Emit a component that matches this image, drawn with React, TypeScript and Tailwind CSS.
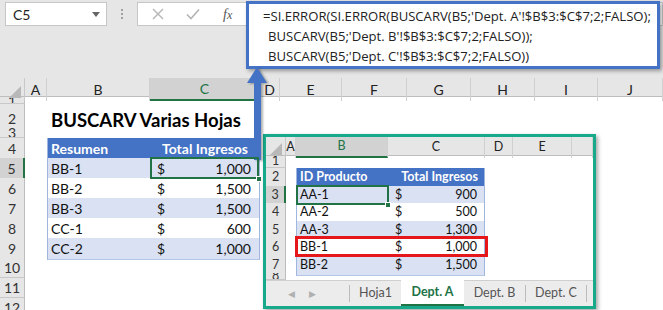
import React from 'react'

const FONT = { fontFamily: 'Lato, "Open Sans", sans-serif' }

const mainCols = ['A', 'B', 'C', 'D', 'E', 'F', 'G', 'H', 'I', 'J']
const mainRows: { n: number; h: string }[] = [
  { n: 1, h: 'h-[7px]' },
  { n: 2, h: 'h-[24px]' },
  { n: 3, h: 'h-[10px]' },
  { n: 4, h: 'h-[20px]' },
  { n: 5, h: 'h-[20px]' },
  { n: 6, h: 'h-[20px]' },
  { n: 7, h: 'h-[20px]' },
  { n: 8, h: 'h-[20px]' },
  { n: 9, h: 'h-[20px]' },
  { n: 10, h: 'h-[20px]' },
  { n: 11, h: 'h-[20px]' },
  { n: 12, h: 'h-[20px]' },
]

const resumen = [
  { id: 'BB-1', v: '1,000' },
  { id: 'BB-2', v: '1,500' },
  { id: 'BB-3', v: '1,500' },
  { id: 'CC-1', v: '600' },
  { id: 'CC-2', v: '1,000' },
]

const deptA = [
  { id: 'AA-1', v: '900' },
  { id: 'AA-2', v: '500' },
  { id: 'AA-3', v: '1,300' },
  { id: 'BB-1', v: '1,000' },
  { id: 'BB-2', v: '1,500' },
]

function FormulaBar() {
  return (
    <div className="h-[78px] bg-[#e6e6e6]">
      <div className="flex items-start pt-[2px]">
        <div className="ml-[5px] w-[102px] h-[24px] bg-white border border-[#c6c6c6] flex items-center justify-between pl-[7px] pr-[6px]">
          <span className="text-[14px] text-[#222]" style={FONT}>C5</span>
          <span className="w-0 h-0 border-l-[4px] border-r-[4px] border-t-[5px] border-l-transparent border-r-transparent border-t-[#666]" />
        </div>
        <div className="w-[30px] h-[24px] flex flex-col items-center justify-center gap-[2px]">
          <span className="w-[2px] h-[2px] bg-[#a0a0a0]" />
          <span className="w-[2px] h-[2px] bg-[#a0a0a0]" />
          <span className="w-[2px] h-[2px] bg-[#a0a0a0]" />
        </div>
        <div className="flex-1 h-[24px] bg-white border border-[#c6c6c6] flex items-center">
          <svg className="ml-[14px]" width="12" height="12" viewBox="0 0 12 12">
            <path d="M1 1L11 11M11 1L1 11" stroke="#b4b4b4" strokeWidth="1.4" fill="none" />
          </svg>
          <svg className="ml-[22px]" width="14" height="12" viewBox="0 0 14 12">
            <path d="M1 6.5L5 10.5L13 1.5" stroke="#b4b4b4" strokeWidth="1.6" fill="none" />
          </svg>
          <span className="ml-[23px] italic text-[14px] text-[#555]" style={{ fontFamily: '"Liberation Serif", serif' }}>
            f<span className="text-[12px]">x</span>
          </span>
        </div>
      </div>
    </div>
  )
}

function ColHeader({ labels, cls, sel, small }: { labels: string[]; cls: string; sel: string; small?: boolean }) {
  return (
    <div className={`grid ${cls} bg-[#e6e6e6] border-b border-[#bdbdbd]`} style={FONT}>
      <div className="relative border-r border-[#c8c8c8]">
        <span className="absolute right-[3px] bottom-[3px] w-0 h-0" style={{ borderBottom: '12px solid #b8b8b8', borderLeft: '12px solid transparent' }} />
      </div>
      {labels.map((c) => (
        <div
          key={c}
          className={`flex items-center justify-center border-r border-[#d0d0d0] ${small ? 'text-[12.5px]' : 'text-[14px]'} ${
            c === sel ? 'bg-[#d2d2d2] text-[#217346] border-b-2 border-b-[#217346]' : 'text-[#222]'
          }`}
        >
          {c}
        </div>
      ))}
    </div>
  )
}

function MainSheet() {
  const cls = 'grid-cols-[25px_22px_103px_110px_20px_62px_65px_64px_64px_63px_65px]'
  return (
    <div>
      <div className="h-[19px]">
        <ColHeader labels={mainCols} cls={`${cls} h-[19px]`} sel="C" />
      </div>
      {mainRows.map(({ n, h }) => {
        const data = n >= 5 && n <= 9 ? resumen[n - 5] : null
        const band = n === 5 || n === 7 || n === 9
        const tbl = n >= 4 && n <= 9
        const cellBg = n === 4 ? 'bg-[#4472c4]' : band ? 'bg-[#d9e1f2]' : 'bg-white'
        return (
          <div key={n} className={`grid ${cls} ${h}`} style={FONT}>
            <div
              className={`flex items-center justify-center overflow-hidden text-[14px] text-[#333] border-b border-[#c8c8c8] ${
                n === 5 ? 'bg-[#d2d2d2] border-r-2 border-r-[#217346]' : 'bg-[#e6e6e6] border-r border-r-[#bdbdbd]'
              }`}
            >
              {n}
            </div>
            <div />
            <div
              className={`flex items-center overflow-visible whitespace-nowrap pl-[3px] text-[14px] ${
                tbl ? `${cellBg} border-l border-[#9fb6df] border-b border-b-[#b4c6e7]` : ''
              } ${n === 4 ? 'font-bold text-white' : 'text-[#111]'}`}
            >
              {n === 2 && <span className="pl-[1px] pt-[3px] text-[18.5px] font-bold text-black">BUSCARV Varias Hojas</span>}
              {n === 4 && 'Resumen'}
              {data && data.id}
            </div>
            <div
              className={`relative flex items-center text-[14px] ${
                tbl ? `${cellBg} border-r border-[#9fb6df] border-b border-b-[#b4c6e7]` : ''
              } ${n === 4 ? 'font-bold text-white justify-end pr-[11px]' : 'text-[#111] justify-between pl-[7px] pr-[8px]'}`}
            >
              {n === 4 && 'Total Ingresos'}
              {data && (
                <>
                  <span>$</span>
                  <span>{data.v}</span>
                </>
              )}
              {n === 5 && (
                <>
                  <span className="absolute inset-0 -top-[1px] border-2 border-[#217346] z-10" />
                  <span className="absolute -right-[3px] -bottom-[3px] w-[6px] h-[6px] bg-[#217346] border border-white z-10" />
                </>
              )}
            </div>
            <div />
            <div />
            <div />
            <div />
            <div />
            <div />
            <div />
          </div>
        )
      })}
    </div>
  )
}

function Inset() {
  const cls = 'grid-cols-[20px_10px_92px_97px_28px_59px_21px]'
  const rows: { n: number; h: string }[] = [
    { n: 1, h: 'h-[12px]' },
    { n: 2, h: 'h-[18px]' },
    { n: 3, h: 'h-[17px]' },
    { n: 4, h: 'h-[18px]' },
    { n: 5, h: 'h-[17px]' },
    { n: 6, h: 'h-[18px]' },
    { n: 7, h: 'h-[17px]' },
    { n: 8, h: 'h-[7px]' },
  ]
  return (
    <div className="absolute left-[263px] top-[134px] w-[333px] h-[175px] border-[3px] border-[#17a98a] bg-white shadow-[2px_2px_4px_rgba(0,0,0,0.35)] overflow-hidden flex flex-col">
      <div className="h-[19px]">
        <ColHeader labels={['A', 'B', 'C', 'D', 'E', '']} cls={`${cls} h-[19px]`} sel="B" small />
      </div>
      {rows.map(({ n, h }) => {
        const data = n >= 3 && n <= 7 ? deptA[n - 3] : null
        const band = n === 3 || n === 5 || n === 7
        const tbl = n >= 2 && n <= 7
        const cellBg = n === 2 ? 'bg-[#4472c4]' : band ? 'bg-[#d9e1f2]' : 'bg-white'
        return (
          <div key={n} className={`grid ${cls} ${h} shrink-0`} style={FONT}>
            <div
              className={`flex items-center justify-center overflow-hidden text-[12.5px] text-[#333] border-b border-[#c8c8c8] ${
                n === 3 ? 'bg-[#d2d2d2] border-r-2 border-r-[#217346]' : 'bg-[#e6e6e6] border-r border-r-[#bdbdbd]'
              }`}
            >
              {n}
            </div>
            <div />
            <div
              className={`relative flex items-center pl-[3px] text-[12.5px] ${
                tbl ? `${cellBg} border-l border-[#9fb6df] border-b border-b-[#b4c6e7]` : ''
              } ${n === 2 ? 'font-bold text-white' : 'text-[#111]'}`}
            >
              {n === 2 && 'ID Producto'}
              {data && data.id}
              {n === 3 && (
                <>
                  <span className="absolute -left-px -right-px -top-[1px] bottom-0 border-2 border-[#217346] z-10" />
                  <span className="absolute -right-[3px] -bottom-[3px] w-[6px] h-[6px] bg-[#217346] border border-white z-10" />
                </>
              )}
              {n === 6 && (
                <span className="absolute -left-[2px] -top-[2px] w-[193px] h-[21px] border-[3px] border-[#e5171a] z-10" />
              )}
            </div>
            <div
              className={`flex items-center text-[12.5px] ${
                tbl ? `${cellBg} border-r border-[#9fb6df] border-b border-b-[#b4c6e7]` : ''
              } ${n === 2 ? 'font-bold text-white justify-end pr-[6px]' : 'text-[#111] justify-between pl-[7px] pr-[7px]'}`}
            >
              {n === 2 && 'Total Ingresos'}
              {data && (
                <>
                  <span>$</span>
                  <span>{data.v}</span>
                </>
              )}
            </div>
            <div />
            <div />
            <div />
          </div>
        )
      })}
      <div className="flex-1 flex items-stretch bg-[#ececec] border-t border-[#cfcfcf] text-[12.5px] text-[#555]" style={FONT}>
        <div className="w-[83px] flex items-center pl-[22px] gap-[14px] text-[9px] text-[#b0b0b0]">
          <span>◀</span>
          <span>▶</span>
        </div>
        <div className="w-px bg-[#bcbcbc] my-[4px]" />
        <div className="w-[51px] flex items-center justify-center">Hoja1</div>
        <div className="w-[63px] flex items-center justify-center bg-white font-bold text-[#217346] border-b-2 border-[#217346] -mt-px">
          Dept. A
        </div>
        <div className="w-[61px] flex items-center justify-center">Dept. B</div>
        <div className="w-px bg-[#bcbcbc] my-[4px]" />
        <div className="w-[60px] flex items-center justify-center">Dept. C</div>
        <div className="w-px bg-[#bcbcbc] my-[4px]" />
      </div>
    </div>
  )
}

function FormulaPopup() {
  return (
    <div
      className="absolute left-[246px] top-[1px] w-[414px] h-[68px] bg-white border-[3px] border-[#4472c4] shadow-[2px_2px_4px_rgba(0,0,0,0.35)] pl-[14px] pt-[2px] text-[13.1px] leading-[20px] text-[#222] whitespace-nowrap"
      style={{ fontFamily: '"Open Sans", sans-serif' }}
    >
      <div>=SI.ERROR(SI.ERROR(BUSCARV(B5;'Dept. A'!$B$3:$C$7;2;FALSO);</div>
      <div className="pl-[5px]">BUSCARV(B5;'Dept. B'!$B$3:$C$7;2;FALSO));</div>
      <div className="pl-[5px]">BUSCARV(B5;'Dept. C'!$B$3:$C$7;2;FALSO))</div>
    </div>
  )
}

function Arrow() {
  return (
    <svg className="absolute left-[245px] top-[66px] drop-shadow-[2px_1px_1px_rgba(0,0,0,0.3)]" width="24" height="96" viewBox="0 0 24 96">
      <path d="M12 1L22 17H16V94H9V17H2Z" fill="#4472c4" />
    </svg>
  )
}

export default function App() {
  return (
    <div className="relative w-[663px] h-[310px] overflow-hidden bg-white">
      <FormulaBar />
      <MainSheet />
      <Inset />
      <FormulaPopup />
      <Arrow />
    </div>
  )
}
